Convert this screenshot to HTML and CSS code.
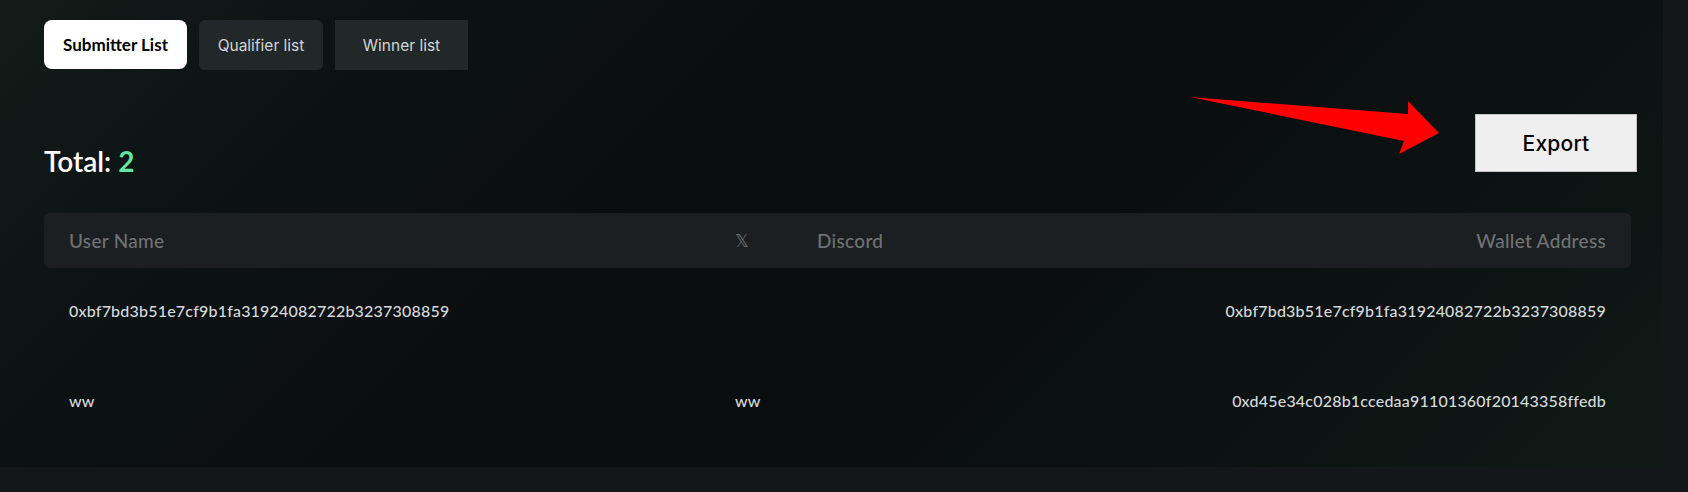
FILE: index.html
```html
<!DOCTYPE html>
<html lang="en">
<head>
<meta charset="utf-8">
<title>Submitter List</title>
<link rel="stylesheet" href="styles.css">
</head>
<body>
<div class="page">
  <main class="panel">
    <nav class="tabs">
      <button class="tab tab-active">Submitter List</button>
      <button class="tab tab-rounded">Qualifier list</button>
      <button class="tab tab-square">Winner list</button>
    </nav>

    <div class="toolbar">
      <div class="total">Total: <span class="total-num">2</span></div>
      <button class="export">Export</button>
    </div>

    <svg class="arrow" width="260" height="70" viewBox="0 0 260 70" aria-hidden="true">
      <polygon points="1,1 219,18 219,5 250,37 210,58 215,45" fill="#ff0000"/>
    </svg>

    <div class="table">
      <div class="thead">
        <div class="th">User Name</div>
        <div class="th th-x">𝕏</div>
        <div class="th">Discord</div>
        <div class="th th-right">Wallet Address</div>
      </div>
      <div class="tr">
        <div class="td">0xbf7bd3b51e7cf9b1fa31924082722b3237308859</div>
        <div class="td"></div>
        <div class="td"></div>
        <div class="td td-right">0xbf7bd3b51e7cf9b1fa31924082722b3237308859</div>
      </div>
      <div class="tr">
        <div class="td">ww</div>
        <div class="td">ww</div>
        <div class="td"></div>
        <div class="td td-right">0xd45e34c028b1ccedaa91101360f20143358ffedb</div>
      </div>
    </div>
  </main>
</div>
</body>
</html>
```

FILE: styles.css
```css
* { box-sizing: border-box; }

html, body {
  margin: 0;
  padding: 0;
  background: #141719;
}

body {
  width: 1688px;
  height: 492px;
  overflow: hidden;
  font-family: "Lato", "Noto Sans", sans-serif;
}

.page {
  width: 1688px;
  height: 492px;
}

.panel {
  position: relative;
  width: 1663px;
  height: 467px;
  padding: 20px 26px 0 44px;
  background:
    linear-gradient(135deg, #131c19 0%, #0c1113 22%, #0a0e10 40%, #0a0e10 62%, #0c1312 80%, #0f1a16 100%);
}

.tabs {
  display: flex;
  gap: 12px;
}

.tab {
  border: none;
  height: 49px;
  padding: 0;
  cursor: pointer;
}

.tab-active {
  width: 143px;
  background: #ffffff;
  color: #000000;
  border-radius: 8px;
  font-family: "Lato", sans-serif;
  font-weight: 700;
  font-size: 17px;
}

.tab-rounded,
.tab-square {
  height: 50px;
  background: #222829;
  color: #d2d5d5;
  font-family: "Inter", "Liberation Sans", sans-serif;
  font-size: 15.5px;
  font-weight: 400;
}

.tab-rounded {
  width: 124px;
  border-radius: 6px;
}

.tab-square {
  width: 133px;
  border-radius: 0;
}

.toolbar {
  display: flex;
  align-items: flex-end;
  justify-content: space-between;
  margin-top: 44px;
}

.total {
  color: #ffffff;
  font-size: 28px;
  font-weight: 600;
  line-height: 1;
  margin-bottom: -3px;
}

.total-num {
  color: #63e6a0;
  font-weight: 700;
}

.export {
  width: 162px;
  height: 58px;
  background: #efefef;
  border: 1px solid #c4c4c4;
  color: #000000;
  font-family: "Inter", "Liberation Sans", sans-serif;
  font-weight: 500;
  font-size: 21px;
  letter-spacing: 0.2px;
  padding: 0;
  cursor: pointer;
}

.arrow {
  position: absolute;
  left: 1189px;
  top: 96px;
}

.table {
  margin-top: 41px;
  margin-right: 6px;
}

.thead,
.tr {
  display: grid;
  grid-template-columns: 666px 82px 1fr auto;
  align-items: center;
  padding: 0 25px 0 25px;
}

.thead {
  height: 55px;
  background: #1b1f21;
  border-radius: 6px;
}

.th {
  color: #6e7274;
  font-size: 19px;
  font-weight: 500;
  letter-spacing: 0.3px;
}

.th-x {
  font-family: "DejaVu Sans", sans-serif;
  font-size: 17px;
  letter-spacing: 0;
}

.th-right,
.td-right {
  text-align: right;
}

.tr {
  height: 90px;
  padding-bottom: 5px;
}

.td {
  color: #d6d9db;
  font-size: 16px;
  font-weight: 500;
  letter-spacing: 0.2px;
}
```
